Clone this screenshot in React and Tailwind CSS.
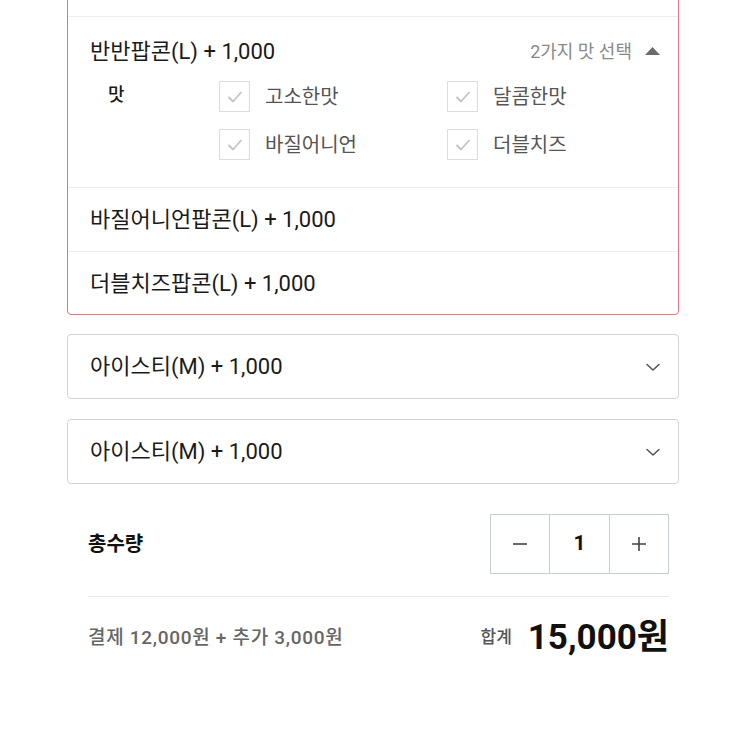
import React, { useState } from "react";

const FONT = { fontFamily: '"Roboto", "Noto Sans CJK KR", sans-serif' };

const flavors = [
    ["고소한맛", "달콤한맛"],
    ["바질어니언", "더블치즈"],
];

function CheckBox() {
    return (
        <span className="flex h-[31px] w-[31px] shrink-0 items-center justify-center border border-[#dcdcdc] bg-white">
            <svg width="20" height="20" viewBox="0 0 20 20" fill="none">
                <path d="M4 10.5 L8 14.5 L16 5.5" stroke="#c4c4c4" strokeWidth="1.8" strokeLinecap="round" strokeLinejoin="round" />
            </svg>
        </span>
    );
}

function SelectBox({ label }) {
    return (
        <div className="flex h-[65px] items-center justify-between rounded-[4px] border border-[#d4d4d8] bg-white pl-[22px] pr-[16px]">
            <span className="text-[22px] text-[#1a1a1a]">{label}</span>
            <svg width="18" height="18" viewBox="0 0 18 18" fill="none">
                <path d="M3 6.5 L9 12 L15 6.5" stroke="#555" strokeWidth="1.6" strokeLinecap="round" strokeLinejoin="round" />
            </svg>
        </div>
    );
}

export default function App() {
    const [qty, setQty] = useState(1);

    return (
        <div className="h-[750px] w-[750px] overflow-hidden bg-white" style={FONT}>
            <div className="ml-[67px] w-[612px]">
                {/* 열린 옵션 박스 */}
                <div className="-mt-[12px] rounded-[4px] border border-[#e8737f]">
                    <div className="h-[28px] border-b border-[#ededed]"></div>

                    <div className="border-b border-[#ededed] pb-[27px] pl-[22px] pr-[17px] pt-[20px]">
                        <div className="flex h-[28px] items-center justify-between">
                            <span className="text-[22px] text-[#1a1a1a]">반반팝콘(L) + 1,000</span>
                            <div className="flex items-center gap-[12px]">
                                <span className="text-[18px] text-[#8a8a8a]">2가지 맛 선택</span>
                                <svg width="17" height="10" viewBox="0 0 17 10">
                                    <path d="M8.5 1 L16 9 L1 9 Z" fill="#6b6b6b" />
                                </svg>
                            </div>
                        </div>

                        <div className="mt-[16px] flex">
                            <span className="ml-[18px] w-[111px] shrink-0 pt-[1px] text-[18px] font-medium leading-[26px] text-[#1a1a1a]">맛</span>
                            <div className="flex flex-col gap-[17px]">
                                {flavors.map((row, i) => (
                                    <div key={i} className="flex">
                                        {row.map((name) => (
                                            <div key={name} className="flex w-[228px] shrink-0 items-center gap-[15px]">
                                                <CheckBox />
                                                <span className="text-[20px] text-[#555]">{name}</span>
                                            </div>
                                        ))}
                                    </div>
                                ))}
                            </div>
                        </div>
                    </div>

                    <div className="flex h-[64px] items-center border-b border-[#ededed] pl-[22px]">
                        <span className="text-[22px] text-[#1a1a1a]">바질어니언팝콘(L) + 1,000</span>
                    </div>
                    <div className="flex h-[62px] items-center pl-[22px]">
                        <span className="text-[22px] text-[#1a1a1a]">더블치즈팝콘(L) + 1,000</span>
                    </div>
                </div>

                <div className="mt-[19px] flex flex-col gap-[20px]">
                    <SelectBox label="아이스티(M) + 1,000" />
                    <SelectBox label="아이스티(M) + 1,000" />
                </div>
            </div>

            <div className="ml-[88px] w-[581px]">
                <div className="mt-[30px] flex items-center justify-between">
                    <span className="text-[20px] font-bold text-[#111]">총수량</span>
                    <div className="flex h-[60px] border border-[#c9ced6]">
                        <button onClick={() => setQty(Math.max(1, qty - 1))} className="flex w-[59px] items-center justify-center border-r border-[#c9ced6]">
                            <svg width="18" height="18" viewBox="0 0 18 18">
                                <path d="M2 9 H16" stroke="#444" strokeWidth="1.6" />
                            </svg>
                        </button>
                        <span className="flex w-[59px] items-center justify-center text-[21px] font-bold text-[#111]">{qty}</span>
                        <button onClick={() => setQty(qty + 1)} className="flex w-[59px] items-center justify-center border-l border-[#c9ced6]">
                            <svg width="18" height="18" viewBox="0 0 18 18">
                                <path d="M2 9 H16 M9 2 V16" stroke="#444" strokeWidth="1.6" />
                            </svg>
                        </button>
                    </div>
                </div>

                <div className="mt-[22px] border-t border-[#e6e6e6]"></div>

                <div className="mt-[20px] flex items-center justify-between">
                    <span className="text-[19px] font-medium tracking-[0.7px] text-[#666]">결제 12,000원 + 추가 3,000원</span>
                    <div className="flex items-center gap-[16px]">
                        <span className="text-[17px] font-medium text-[#555]">합계</span>
                        <span className="text-[35px] font-bold leading-[42px] text-[#111]">15,000원</span>
                    </div>
                </div>
            </div>
        </div>
    );
}
